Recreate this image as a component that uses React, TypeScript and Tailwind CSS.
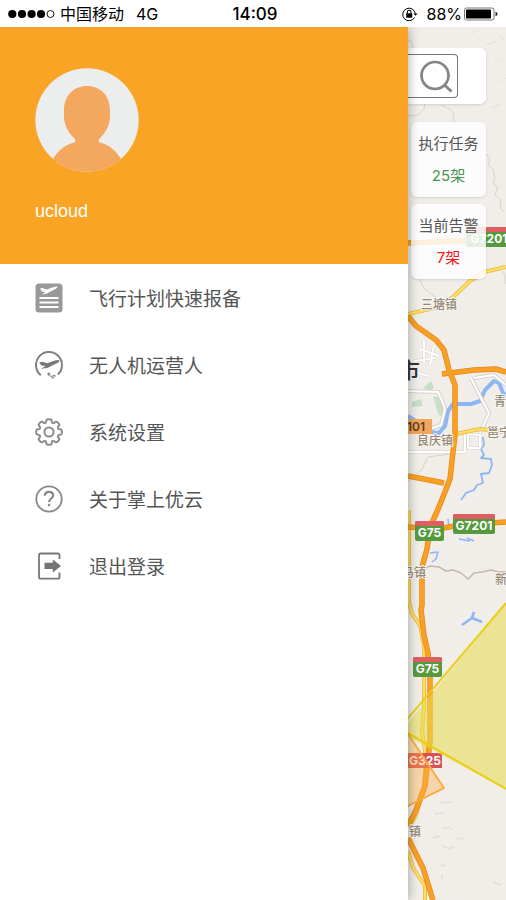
import React from 'react'

interface MenuItem {
  id: string;
  label: string;
  icon: React.ReactNode;
}

interface StatCard {
  id: string;
  title: string;
  value: string;
  valueClass: string;
}

// Closed outline of an eight-toothed cog centred in a 28x28 box
const cogPath = () => {
  const at = (deg: number, r: number) => {
    const a = (deg * Math.PI) / 180
    return `${(14 + r * Math.sin(a)).toFixed(2)} ${(14 - r * Math.cos(a)).toFixed(2)}`
  }
  let d = ''
  for (let i = 0; i < 8; i++) {
    const c = i * 45
    d += `${i === 0 ? 'M' : 'L'}${at(c - 9, 12.7)} Q${at(c, 13.2)} ${at(c + 9, 12.7)} `
    d += `Q${at(c + 14, 12.2)} ${at(c + 14, 11)} Q${at(c + 22.5, 8.6)} ${at(c + 31, 11)} Q${at(c + 31, 12.2)} ${at(c + 36, 12.7)} `
  }
  return d + 'Z'
}

const PlanIcon = () => (
  <svg viewBox="0 0 28 30" className="w-7 h-[30px]" aria-hidden="true">
    <rect x="0.5" y="0.5" width="27" height="29" rx="3.5" fill="#999999" />
    <path
      d="M5 5.600l2.400-.5 4.300 1.500 6.300-2.400q4.300-1.200 4.500-.2 0 1.200-3.700 2.800L12 10.600l-5.200.8 3.600-2.500-3.600-.5z"
      fill="#ffffff"
    />
    <path d="M4.500 15h19M4.500 19.500h19M4.500 24h19" stroke="#ffffff" strokeWidth="2.200" />
  </svg>
)

const OperatorIcon = () => (
  <svg viewBox="0 0 28 30" className="w-7 h-[30px]" aria-hidden="true">
    <path d="M5.800 25.200A13 13 0 1 1 22.800 24.600" fill="none" stroke="#808080" strokeWidth="2" />
    <path
      d="M4 12.600l3-.8 5.200 1.500 7.600-2.900q4.600-1.200 4.700.4 0 1.600-4.700 3.500L12.300 18l-6.300.7 4.600-2.800-4-.5z"
      fill="#777777"
    />
    <path d="M12 23.800l2.300-1.500 1.200 2.200-2 1.500z" fill="#858585" />
    <path d="M15.800 26l2.400 2M18.500 25.600l1.400.3" stroke="#8a8a8a" strokeWidth="1.600" strokeLinecap="round" />
  </svg>
)

const SettingsIcon = () => (
  <svg viewBox="0 0 28 28" className="size-7" aria-hidden="true" fill="none" stroke="#8c8c8c" strokeWidth="2" strokeLinejoin="round">
    <path d={cogPath()} />
    <circle cx="14" cy="14" r="4.6" />
  </svg>
)

const AboutIcon = () => (
  <svg viewBox="0 0 28 28" className="size-7" aria-hidden="true" fill="none" stroke="#888888">
    <circle cx="14" cy="14" r="12.700" strokeWidth="1.800" />
    <path d="M9.800 10.800c.1-2.500 1.800-3.900 4.200-3.900s4.200 1.400 4.200 3.600c0 3-4.100 3.100-4.100 6.600" strokeWidth="2.200" />
    <rect x="12.900" y="18.800" width="2.300" height="2.400" fill="#888888" stroke="none" />
  </svg>
)

const LogoutIcon = () => (
  <svg viewBox="0 0 28 28" className="size-7" aria-hidden="true">
    <path d="M24.500 7V3.200Q24.500 1.500 22.800 1.500H5.700Q4 1.500 4 3.200V25Q4 26.700 5.700 26.700H22.800Q24.500 26.700 24.500 25V20.500" fill="none" stroke="#777777" strokeWidth="1.800" />
    <path d="M9.500 10.800h8.300V7.600L26 14l-8.200 6.400v-3.300H9.500z" fill="#747474" />
  </svg>
)

const menuItems: MenuItem[] = [
  { id: 'plan', label: '飞行计划快速报备', icon: <PlanIcon /> },
  { id: 'operator', label: '无人机运营人', icon: <OperatorIcon /> },
  { id: 'settings', label: '系统设置', icon: <SettingsIcon /> },
  { id: 'about', label: '关于掌上优云', icon: <AboutIcon /> },
  { id: 'logout', label: '退出登录', icon: <LogoutIcon /> },
]

const statCards: StatCard[] = [
  { id: 'tasks', title: '执行任务', value: '25架', valueClass: 'text-[#4b9455]' },
  { id: 'alerts', title: '当前告警', value: '7架', valueClass: 'text-[#f01818]' },
]

const StatusBar = () => (
  <header className="h-[27px] px-2 grid grid-cols-[1fr_auto_1fr] items-center bg-white text-black text-base leading-none">
    <div className="flex items-center">
      <svg viewBox="0 0 48 10" className="w-12 h-2.5 mr-1" aria-hidden="true">
        <circle cx="4.300" cy="5" r="4.100" />
        <circle cx="14" cy="5" r="4.100" />
        <circle cx="23.600" cy="5" r="4.100" />
        <circle cx="33" cy="5" r="4.100" />
        <circle cx="42.500" cy="5" r="3.500" fill="none" stroke="#000000" strokeWidth="0.900" />
      </svg>
      <span>中国移动</span>
      <span className="ml-3">4G</span>
    </div>
    <span className="pt-0.5 pl-1 text-[17px] font-medium">14:09</span>
    <div className="flex items-center justify-end">
      <svg viewBox="0 0 16 14" className="w-4 h-3.5 mr-2" aria-hidden="true" fill="none" stroke="#000000">
        <path d="M12.600 10.500A6.300 6.300 0 1 1 13.300 6.500" strokeWidth="1" />
        <path d="M11.500 6.500h4l-2 2.300z" fill="#000000" stroke="none" />
        <rect x="4.200" y="6.300" width="6" height="4.400" fill="#000000" stroke="none" />
        <path d="M5.400 6.500V5a1.800 1.800 0 0 1 3.600 0v1.500" strokeWidth="1.100" />
      </svg>
      <span>88%</span>
      <svg viewBox="0 0 34 14" className="w-[34px] h-3.5 ml-0.5" aria-hidden="true">
        <rect x="0.500" y="1" width="29.500" height="12" rx="2" fill="none" stroke="#777777" />
        <rect x="2" y="2.400" width="25" height="9.200" rx="0.800" fill="#000000" />
        <path d="M31.500 4.800c1.500.5 2 1.200 2 2.200s-.5 1.700-2 2.200z" fill="#222222" />
      </svg>
    </div>
  </header>
)

const Drawer = () => (
  <aside className="relative z-10 flex-1 min-w-0 bg-white shadow-[1px_0_10px_rgba(0,0,0,0.3)]">
    <div className="h-[237px] pt-[41px] px-[35px] bg-[#f9a424]">
      <svg viewBox="0 0 104 104" className="size-[104px]" role="img" aria-label="ucloud">
        <defs>
          <clipPath id="avatar">
            <circle cx="52" cy="52" r="51.700" />
          </clipPath>
        </defs>
        <circle cx="52" cy="52" r="51.700" fill="#ebeeed" />
        <path
          d="M52 18C39 18 29 27 29 42.500v6C29 57 33.500 65 39 70c2 2.500 2 3.800-.5 4.800C29 77 22 84 17.500 92v12h69V92C82 84 75 77 65.500 74.800c-2.500-1-2.500-2.300-.5-4.800C70.500 65 75 57 75 48.500v-6C75 27 65 18 52 18z"
          fill="#f4a75e"
          clipPath="url(#avatar)"
        />
      </svg>
      <p className="mt-[27px] text-lg leading-6 text-white font-['Liberation_Sans',sans-serif]">ucloud</p>
    </div>
    <nav>
      <ul>
        {menuItems.map((item) => (
          <li key={item.id}>
            <a href={`#${item.id}`} className="flex items-center gap-[26px] h-[67px] px-[35px] text-[19px] text-[#555555]">
              {item.icon}
              <span className="pt-1.5">{item.label}</span>
            </a>
          </li>
        ))}
      </ul>
    </nav>
  </aside>
)

interface ShieldProps {
  x: number;
  y: number;
  width: number;
  label: string;
}

const RoadShield = ({ x, y, width, label }: ShieldProps) => (
  <g>
    <rect x={x} y={y} width={width} height="20" rx="2" fill="#569a3e" />
    <path d={`M${x} ${y + 5}v-3q0-2 2-2h${width - 4}q2 0 2 2v3z`} fill="#de5f63" />
    <text x={x + width / 2} y={y + 16} textAnchor="middle" fontSize="12" fontWeight="700" fill="#ffffff">{label}</text>
  </g>
)

const MapCanvas = () => (
  <svg
    viewBox="408 27 98 873"
    preserveAspectRatio="xMinYMin slice"
    className="absolute inset-0 size-full"
    aria-hidden="true"
    fill="none"
    strokeLinejoin="round"
  >
    <rect x="408" y="27" width="98" height="873" fill="#f1eeea" />

    {/* relief and district borders */}
    <g stroke="#d8d3cd" strokeWidth="1">
      <path d="M408 40l4 2 1 6M408 116l10-1 6-6 1-6M441 105l9 4 4 5-1 6 4 4M487 154l3 6-2 5 5 4 2 8-2 6 5 4-3 8 6 5-1 8 4 4" />
      <path d="M470 34l6-3M486 45l10-4M494 63l8-5M500 82l6-4M492 108l9-4M499 36l5 4" stroke="#e4e0db" />
      <path d="M420 279l3 8 8 7 6 4M503 271l2 5v8" />
    </g>
    <g stroke="#e4e1dc" strokeWidth="2">
      <path d="M440 803l12-1M434 814l9-1M443 829q6-4 9 1M433 838l7-2M457 839l8-1M442 845q6 6 12 1M440 866l6-1M493 882l8 3M442 875v4" />
    </g>
    <path d="M422 570l8-4 9 1 7 4 7-1 8 3 7 6 6-6 8-1 9-2 8 2h7" stroke="#c4b9aa" strokeWidth="1.500" />

    {/* parks */}
    <path d="M433 396l8 2 3 7-1 13-5-4zM412 402l9-3 2 7-11 1zM423 388l8-7 3 7-5 4z" fill="#c9e0c8" />

    {/* rivers */}
    <g stroke="#8db6f7">
      <path d="M408 416l9 6 14 10 8 1 6-7 3-15 5-7h18l9-3 5-11 9-9 5 2 4 10 6 5" strokeWidth="4" />
      <path d="M483 437l1 8-3 4 3 6-3 3 10 1 1 6-3 8-8 1 2 9-6 2-3 5-8 3-5 7" strokeWidth="1.800" />
      <path d="M462 625l10-7 10 4M472 618l2-6" strokeWidth="2.600" />
      <path d="M430 553l8-1-2 7-4 3M448 519l1 10M459 539l11 2M467 538l7 3" strokeWidth="1.500" />
    </g>

    {/* minor streets */}
    <g stroke="#d6d1cc">
      <path d="M408 391l30 1 4 9 3 8-4 16-9 3-24-7M471 378l10 20 8 15-9 20M474 378l20-3 12 10" strokeWidth="4" />
      <path d="M420 349l19 7M424 341v22M414 361l22-3M412 371l16 5M434 345l-4 20M468 434l12 1v13h-12zM408 452h57v-18" strokeWidth="3" />
    </g>
    <g stroke="#ffffff" strokeWidth="2">
      <path d="M408 391l30 1 4 9 3 8-4 16-9 3-24-7M471 378l10 20 8 15-9 20M474 378l20-3 12 10" />
      <path d="M420 349l19 7M424 341v22M414 361l22-3M412 371l16 5M434 345l-4 20M468 434l12 1v13h-12zM408 452h57v-18" />
    </g>
    <path d="M408 482l14-13 6-12 22-3" stroke="#d6d1cc" />

    {/* provincial roads */}
    <g stroke="#e5b840" strokeWidth="4">
      <path d="M408 314l26-6 18-10 18-17 14-9 22-5M456 434l24-5 26 3" />
      <path d="M409 510v92l3 12 8 11 4 22v60l-2 24 4 26-2 32-8 26-7 12M408 851l5 17 12 18v14" />
    </g>
    <g stroke="#ffdc63" strokeWidth="2.500">
      <path d="M408 314l26-6 18-10 18-17 14-9 22-5M456 434l24-5 26 3" />
      <path d="M409 510v92l3 12 8 11 4 22v60l-2 24 4 26-2 32-8 26-7 12M408 851l5 17 12 18v14" />
    </g>

    {/* expressways */}
    <g stroke="#e48a18" strokeWidth="5.500">
      <path d="M408 243l98-4M408 316l8 10 20 14 8 10 5 20 6 15v49l-5 45-11 28-9 20-3 22-5 18v38l-1 5 3 25 4 18 2 18v70l-5 45-9 24-8 16M408 838l15 30 10 32" />
      <path d="M442 374l32-4 22-1 10 3M408 476l36 7M408 527l30 2 22-4 46-3" />
    </g>
    <g stroke="#fa9f25" strokeWidth="4">
      <path d="M408 243l98-4M408 316l8 10 20 14 8 10 5 20 6 15v49l-5 45-11 28-9 20-3 22-5 18v38l-1 5 3 25 4 18 2 18v70l-5 45-9 24-8 16M408 838l15 30 10 32" />
      <path d="M442 374l32-4 22-1 10 3M408 476l36 7M408 527l30 2 22-4 46-3" />
    </g>

    {/* town names and road numbers */}
    <g fontSize="12" fontWeight="500" fill="#958875" stroke="#f8f6f2" strokeWidth="2" paintOrder="stroke">
      <text x="421" y="309">三塘镇</text>
      <text x="417" y="445">良庆镇</text>
      <text x="494" y="406">青</text>
      <text x="487" y="437">邕宁</text>
      <text x="402" y="577">马镇</text>
      <text x="495" y="584">新</text>
      <text x="409" y="836">镇</text>
      <text x="398" y="378" fontSize="22" fill="#333333">市</text>
    </g>
    <rect x="400" y="419" width="32" height="15" fill="#f5a65a" />
    <text x="407" y="431" fontSize="12" fontWeight="600" fill="#5a4029">101</text>
    <RoadShield x={466} y={227} width={46} label="G7201" />
    <RoadShield x={415} y={521} width={29} label="G75" />
    <RoadShield x={453} y={514} width={42} label="G7201" />
    <RoadShield x={413} y={657} width={29} label="G75" />
    <rect x="408" y="753" width="34" height="15" fill="#db5157" />
    <text x="425" y="765" textAnchor="middle" fontSize="12" fontWeight="700" fill="#ffffff">G325</text>

    {/* restricted airspace */}
    <path d="M404 727l7-8L506 603V789L404 735z" fill="#e7dc4d" fillOpacity="0.550" />
    <path d="M404 723L506 603M404 731l102 58" stroke="#e9cf12" strokeWidth="2" />
    <path d="M404 728l40 60-40 20z" fill="#ffae45" fillOpacity="0.400" stroke="#fbaa35" strokeWidth="1.800" />
  </svg>
)

const MapPanel = () => (
  <main className="relative w-[98px] shrink-0 overflow-hidden">
    <MapCanvas />
    <div className="relative pt-[21px] pr-5">
      <div className="h-14 flex items-center bg-white rounded-r-md shadow-sm">
        <button type="button" aria-label="搜索" className="w-[50px] h-11 flex items-center justify-end pr-1 border border-l-0 border-[#777777] rounded-r">
          <svg viewBox="0 0 34 34" className="size-[34px]" fill="none" stroke="#858585">
            <circle cx="16" cy="16.500" r="13.500" strokeWidth="2.700" />
            <path d="M25.500 26l7 6.500" strokeWidth="3" />
          </svg>
        </button>
      </div>
      <div className="mt-[18px] ml-[3px] flex flex-col gap-[7px]">
        {statCards.map((card) => (
          <section key={card.id} className="h-[75px] pt-2.5 flex flex-col items-center gap-2 bg-white/85 rounded-md shadow-sm">
            <h2 className="text-[15px] leading-6 text-[#555555] whitespace-nowrap">{card.title}</h2>
            <p className={`text-[15px] leading-6 ${card.valueClass}`}>{card.value}</p>
          </section>
        ))}
      </div>
    </div>
  </main>
)

export default function App() {
  return (
    <div className="min-h-screen flex flex-col bg-white font-['Inter','Noto_Sans_CJK_SC',sans-serif]" lang="zh-CN">
      <StatusBar />
      <div className="flex-1 flex overflow-hidden">
        <Drawer />
        <MapPanel />
      </div>
    </div>
  )
}
